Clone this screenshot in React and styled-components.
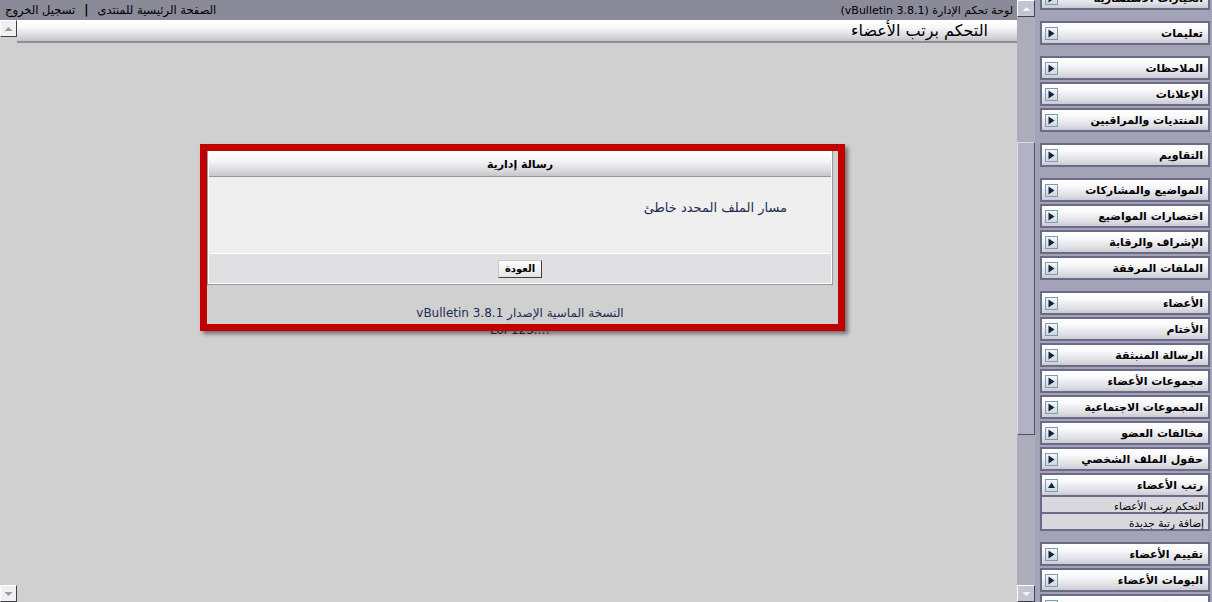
import React from 'react';
import styled, { createGlobalStyle } from 'styled-components';

const Global = createGlobalStyle`
  html, body { margin: 0; padding: 0; overflow: hidden; }
  body { font-family: "DejaVu Sans", sans-serif; background: #d0d0d0; }
`;

const Page = styled.div`
  display: flex;
  width: 1212px;
  height: 602px;
  overflow: hidden;
`;

const LeftCol = styled.div`
  width: 1017px;
  display: flex;
  flex-direction: column;
`;

const TopBar = styled.div`
  height: 20px;
  flex: none;
  background: #8a8a98;
  display: flex;
  justify-content: space-between;
  align-items: center;
  padding: 0 4px 0 5px;
  font-size: 11px;
  color: #000;
  direction: rtl;
`;

const TopLinks = styled.div`
  display: flex;
  gap: 9px;
  align-items: center;
  font-size: 11.5px;
`;

const Sep = styled.span`
  font-weight: bold;
`;

const MainFrame = styled.div`
  flex: 1;
  display: flex;
  min-height: 0;
`;

const ScrollBar = styled.div`
  width: ${p => p.$w}px;
  flex: none;
  display: flex;
  flex-direction: column;
  justify-content: space-between;
  background: ${p => p.$track};
  box-sizing: border-box;
`;

const ScrollBtn = styled.div`
  width: ${p => p.$w}px;
  height: 17px;
  box-sizing: border-box;
  background: ${p => p.$bg};
  border: 1px solid;
  border-color: #ffffff #404048 #404048 #ffffff;
  display: flex;
  align-items: center;
  justify-content: center;
`;

const Track = styled.div`
  flex: 1;
  display: flex;
  flex-direction: column;
`;

const Thumb = styled.div`
  box-sizing: border-box;
  background: #b2b2c6;
  border: 1px solid;
  border-color: #dcdce8 #50506a #50506a #dcdce8;
`;

const Content = styled.div`
  flex: 1;
  background: #d0d0d0;
  display: flex;
  flex-direction: column;
  align-items: center;
`;

const TitleBar = styled.div`
  align-self: stretch;
  height: 23px;
  box-sizing: border-box;
  background: linear-gradient(to bottom, #ffffff 0%, #f8f8fa 35%, #d6d6da 80%, #c4c4c8 100%);
  border-bottom: 2px solid #8e8e96;
  direction: rtl;
  display: flex;
  align-items: center;
  padding-right: 29px;
  font-size: 16px;
  color: #000;
`;

const MsgWrap = styled.div`
  position: relative;
  width: 626px;
  margin: 107px 0 0 6px;
`;

const MsgTable = styled.div`
  background: #ffffff;
  border: 1px solid #9a9aa0;
  padding: 1px;
  direction: rtl;
`;

const MsgHead = styled.div`
  height: 25px;
  box-sizing: border-box;
  background: linear-gradient(to bottom, #ffffff 0%, #f6f6f8 35%, #d8d8dc 80%, #c6c6ca 100%);
  border-bottom: 1px solid #96969e;
  display: flex;
  align-items: center;
  justify-content: center;
  font-size: 11px;
  font-weight: bold;
  color: #000;
`;

const MsgBody = styled.div`
  height: 76px;
  box-sizing: border-box;
  background: #efefef;
  padding: 23px 44px 0 0;
  font-size: 13px;
  color: #1e2e52;
`;

const MsgFoot = styled.div`
  height: 30px;
  box-sizing: border-box;
  background: #e0e0e2;
  border-top: 1px solid #ffffff;
  display: flex;
  align-items: center;
  justify-content: center;
`;

const Button = styled.button`
  font-family: "DejaVu Sans", sans-serif;
  font-size: 10px;
  font-weight: bold;
  height: 18px;
  padding: 0 6px;
  background: linear-gradient(to bottom, #ffffff, #e4e4e4);
  border: 1px solid;
  border-color: #c8c8c8 #404040 #404040 #c8c8c8;
  color: #000;
  direction: rtl;
`;

const Copyright = styled.div`
  margin-top: 20px;
  text-align: center;
  direction: rtl;
  font-size: 12px;
  line-height: 17px;
  color: #1e2e52;
`;

const CopyLine = styled.div`
  direction: ${p => p.$dir || 'rtl'};
`;

const RedMark = styled.div`
  position: absolute;
  left: -7px;
  top: -6px;
  width: 645px;
  height: 187px;
  box-sizing: border-box;
  border: 7px solid #c00000;
  box-shadow: 3px 3px 4px rgba(0, 0, 0, 0.45);
  pointer-events: none;
`;

const NavFrame = styled.div`
  width: 195px;
  flex: none;
  display: flex;
  background: #a3a3b8;
`;

const Nav = styled.div`
  flex: 1;
  padding: 0 2px 0 5px;
  margin-top: -14px;
  direction: rtl;
`;

const Group = styled.div`
  display: flex;
  flex-direction: column;
  gap: 2px;
  margin-bottom: 11px;
`;

const NavBox = styled.div`
  border: 2px solid #6b6b88;
  background: #fff;
`;

const NavHead = styled.div`
  height: 20px;
  box-sizing: border-box;
  background: linear-gradient(to bottom, #ffffff 0%, #fafafc 30%, #dcdce2 80%, #cacad2 100%);
  display: flex;
  align-items: center;
  justify-content: space-between;
  padding: 0 5px 0 3px;
  font-size: 11px;
  font-weight: bold;
  color: #000;
  white-space: nowrap;
`;

const SubItem = styled.div`
  height: 17px;
  box-sizing: border-box;
  border-top: 2px solid #6b6b88;
  background: #d8d8de;
  display: flex;
  align-items: center;
  padding: 2px 4px 0 0;
  font-size: 10.5px;
  color: #000;
`;

const Arrow = ({ up }) => (
  <svg width="13" height="13" viewBox="0 0 13 13">
    <defs>
      <linearGradient id={up ? 'ag-up' : 'ag'} x1="0" y1="0" x2="0" y2="1">
        <stop offset="0" stopColor="#f6fafc" />
        <stop offset="1" stopColor="#c8d6de" />
      </linearGradient>
    </defs>
    <rect x="0.5" y="0.5" width="12" height="12" fill={`url(#${up ? 'ag-up' : 'ag'})`} stroke="#7f9cae" />
    {up ? (
      <path d="M3 9 L6.5 3.5 L10 9 Z" fill="#16213f" />
    ) : (
      <path d="M3.5 2.5 L9.5 6.5 L3.5 10.5 Z" fill="#16213f" />
    )}
  </svg>
);

const ScrollArrow = ({ dir, color }) => (
  <svg width="9" height="6" viewBox="0 0 9 6">
    {dir === 'up' ? (
      <path d="M0.5 5 L4.5 1 L8.5 5 Z" fill={color} />
    ) : (
      <path d="M0.5 1 L4.5 5 L8.5 1 Z" fill={color} />
    )}
  </svg>
);

const groups = [
  ['الخيارات الاستشارية'],
  ['تعليمات'],
  ['الملاحظات', 'الإعلانات', 'المنتديات والمراقبين'],
  ['التقاويم'],
  ['المواضيع والمشاركات', 'اختصارات المواضيع', 'الإشراف والرقابة', 'الملفات المرفقة'],
  ['الأعضاء', 'الأختام', 'الرسالة المنبثقة', 'مجموعات الأعضاء', 'المجموعات الاجتماعية', 'مخالفات العضو', 'حقول الملف الشخصي', 'رتب الأعضاء'],
  ['تقييم الأعضاء', 'البومات الأعضاء', 'الاشتراكات'],
];

const expanded = {
  'رتب الأعضاء': ['التحكم برتب الأعضاء', 'إضافة رتبة جديدة'],
};

export default function App() {
  return (
    <>
      <Global />
      <Page>
        <LeftCol>
          <TopBar>
            <span>لوحة تحكم الإدارة (vBulletin 3.8.1)</span>
            <TopLinks>
              <span>الصفحة الرئيسية للمنتدى</span>
              <Sep>|</Sep>
              <span>تسجيل الخروج</span>
            </TopLinks>
          </TopBar>
          <MainFrame>
            <ScrollBar $w={17} $track="#d0d0d0">
              <ScrollBtn $w={17} $bg="#f0f0f2"><ScrollArrow dir="up" color="#9a9aa0" /></ScrollBtn>
              <ScrollBtn $w={17} $bg="#f0f0f2"><ScrollArrow dir="down" color="#9a9aa0" /></ScrollBtn>
            </ScrollBar>
            <Content>
              <TitleBar>التحكم برتب الأعضاء</TitleBar>
              <MsgWrap>
                <MsgTable>
                  <MsgHead>رسالة إدارية</MsgHead>
                  <MsgBody>مسار الملف المحدد خاطئ</MsgBody>
                  <MsgFoot><Button>العودة</Button></MsgFoot>
                </MsgTable>
                <Copyright>
                  <CopyLine>النسخة الماسية الإصدار vBulletin 3.8.1</CopyLine>
                  <CopyLine $dir="ltr">Lol 123...!</CopyLine>
                </Copyright>
                <RedMark />
              </MsgWrap>
            </Content>
          </MainFrame>
        </LeftCol>
        <NavFrame>
          <ScrollBar $w={18} $track="#acacba">
            <ScrollBtn $w={18} $bg="#c4c4d2"><ScrollArrow dir="up" color="#f4f4f8" /></ScrollBtn>
            <Track>
              <div style={{ height: 125 }} />
              <Thumb style={{ height: 293 }} />
            </Track>
            <ScrollBtn $w={18} $bg="#c4c4d2"><ScrollArrow dir="down" color="#f4f4f8" /></ScrollBtn>
          </ScrollBar>
          <Nav>
            {groups.map((g, i) => (
              <Group key={i}>
                {g.map(item => (
                  <NavBox key={item}>
                    <NavHead>
                      <span>{item}</span>
                      <Arrow up={!!expanded[item]} />
                    </NavHead>
                    {expanded[item] && expanded[item].map(s => <SubItem key={s}>{s}</SubItem>)}
                  </NavBox>
                ))}
              </Group>
            ))}
          </Nav>
        </NavFrame>
      </Page>
    </>
  );
}
